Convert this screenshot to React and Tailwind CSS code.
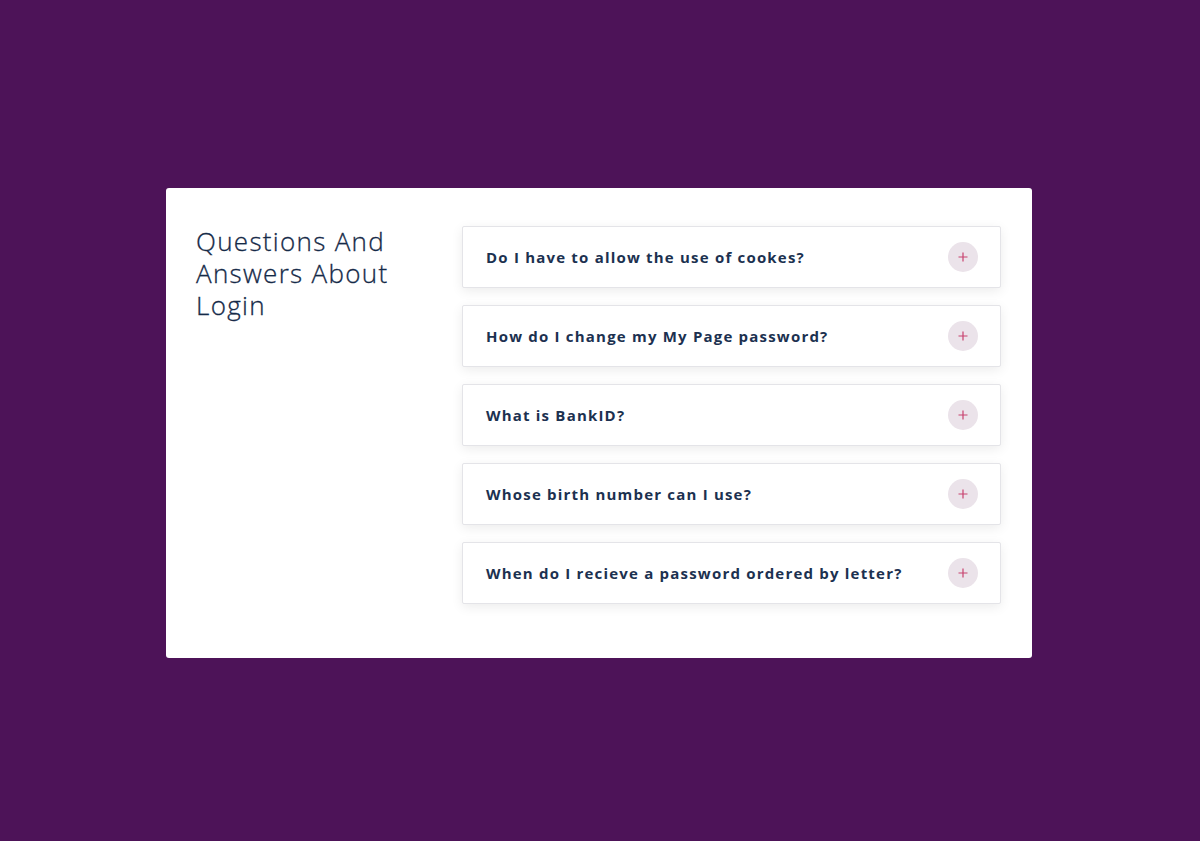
import React from "react";

const items = [
  "Do I have to allow the use of cookes?",
  "How do I change my My Page password?",
  "What is BankID?",
  "Whose birth number can I use?",
  "When do I recieve a password ordered by letter?",
];

export default function App() {
  return (
    <div
      className="w-[1200px] h-[841px] bg-[#4d1358] pt-[188px] pl-[166px]"
      style={{ fontFamily: '"Open Sans", "Noto Sans", sans-serif' }}
    >
      <div className="w-[866px] h-[470px] bg-white rounded-[3px] pl-[30px] pr-[31px] pt-[38px] flex">
        <div className="w-[266px] shrink-0 -mt-[1px]">
          <h1 className="w-[215px] text-[26px] leading-[32px] font-light tracking-[1.3px] text-[#152a48] [-webkit-text-stroke:0.3px_#152a48]">
            Questions And Answers About Login
          </h1>
        </div>
        <div className="flex-1 flex flex-col gap-[17px]">
          {items.map((q) => (
            <div
              key={q}
              className="h-[62px] border border-[#e4e4e8] rounded-[2px] bg-white shadow-[0_3px_12px_rgba(0,0,0,0.08)] flex items-center justify-between pl-[23px] pr-[22px]"
            >
              <span className="text-[15px] font-bold tracking-[1.2px] text-[#1c3150]">
                {q}
              </span>
              <span className="w-[30px] h-[30px] rounded-full bg-[#ebe3ea] flex items-center justify-center">
                <svg width="10" height="10" viewBox="0 0 10 10">
                  <path d="M5 0.5V9.5M0.5 5H9.5" stroke="#c8426e" strokeWidth="1.2" />
                </svg>
              </span>
            </div>
          ))}
        </div>
      </div>
    </div>
  );
}
